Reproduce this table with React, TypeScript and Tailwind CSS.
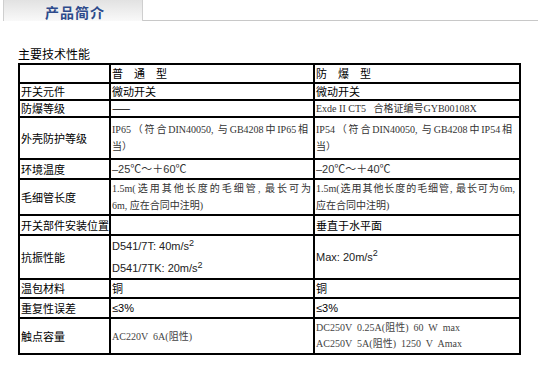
const cjk = "font-['Noto_Sans_CJK_SC',sans-serif]";
const serif = "font-['Liberation_Serif','Noto_Sans_CJK_SC',serif]";
const sans = "font-['Liberation_Sans','Noto_Sans_CJK_SC',sans-serif]";

function Cell({ children, className = "" }: { children?: React.ReactNode; className?: string }) {
  return <div className={`bg-white flex items-center pl-[1px] overflow-hidden ${className}`}>{children}</div>;
}

export default function App() {
  return (
    <div className="w-[538px] h-[381px] bg-white text-black">
      {/* Tab header */}
      <div className="flex h-[21px]">
        <div className="ml-[3px] w-[140px] border-x border-[#cfcfcf] bg-gradient-to-b from-[#e2e2e2] to-[#f9f9f9] flex items-center justify-center pt-[3px]">
          <span className={`${cjk} text-[14px] leading-[16px] font-bold text-[#2e4b8c] tracking-[1px] pl-[4px]`}>产品简介</span>
        </div>
        <div className="flex-1 border-b border-[#c8c8c8]" />
      </div>

      <div className="pl-[18px]">
        <div className={`${cjk} text-[12px] leading-[14px] mt-[26px] mb-[2px]`}>主要技术性能</div>

        <div className="grid w-[503px] grid-cols-[89px_202px_204px] grid-rows-[17px_15px_15px_40px_18px_34px_18px_42px_17px_18px_34px] gap-[2px] p-[2px] bg-black text-[11px] leading-[17px]">
          {/* header */}
          <Cell />
          <Cell className={cjk}>普　通　型</Cell>
          <Cell className={cjk}>防　爆　型</Cell>

          <Cell className={cjk}>开关元件</Cell>
          <Cell className={cjk}>微动开关</Cell>
          <Cell className={cjk}>微动开关</Cell>

          <Cell className={cjk}>防爆等级</Cell>
          <Cell className={cjk}>——</Cell>
          <Cell className={`${serif} text-[10px] text-[#333]`}>Exde II CT5&nbsp;&nbsp; 合格证编号GYB00108X</Cell>

          <Cell className={cjk}>外壳防护等级</Cell>
          <Cell className={`${serif} text-[10px] text-[#333]`}>
            <div className="w-[196px]">
              <span className="block whitespace-nowrap text-justify [text-align-last:justify]">IP65（符合DIN40050, 与GB4208中IP65相</span>
              <span className="block">当）</span>
            </div>
          </Cell>
          <Cell className={`${serif} text-[10px] text-[#333]`}>
            <div className="w-[196px]">
              <span className="block whitespace-nowrap text-justify [text-align-last:justify]">IP54（符合DIN40050, 与GB4208中IP54相</span>
              <span className="block">当）</span>
            </div>
          </Cell>

          <Cell className={cjk}>环境温度</Cell>
          <Cell className={`${sans} text-[#333]`}>–25℃～＋60℃</Cell>
          <Cell className={`${sans} text-[#333]`}>–20℃～＋40℃</Cell>

          <Cell className={cjk}>毛细管长度</Cell>
          <Cell className={`${serif} text-[10px] text-[#333]`}>
            <div className="w-[199px]">
              <span className="block whitespace-nowrap text-justify [text-align-last:justify]">1.5m(选用其他长度的毛细管, 最长可为</span>
              <span className="block">6m, 应在合同中注明)</span>
            </div>
          </Cell>
          <Cell className={`${serif} text-[10px] text-[#333]`}>
            <div className="w-[199px]">
              <span className="block whitespace-nowrap text-justify [text-align-last:justify]">1.5m(选用其他长度的毛细管, 最长可为6m,</span>
              <span className="block">应在合同中注明)</span>
            </div>
          </Cell>

          <Cell className={cjk}>开关部件安装位置</Cell>
          <Cell />
          <Cell className={cjk}>垂直于水平面</Cell>

          <Cell className={cjk}>抗振性能</Cell>
          <Cell className={`${sans} text-[#222] leading-[22px]`}>
            <div>
              <div>D541/7T: 40m/s<sup className="text-[9px]">2</sup></div>
              <div>D541/7TK: 20m/s<sup className="text-[9px]">2</sup></div>
            </div>
          </Cell>
          <Cell className={`${sans} text-[#222]`}>Max: 20m/s<sup className="text-[9px]">2</sup></Cell>

          <Cell className={cjk}>温包材料</Cell>
          <Cell className={cjk}>铜</Cell>
          <Cell className={cjk}>铜</Cell>

          <Cell className={cjk}>重复性误差</Cell>
          <Cell className={sans}>≤3%</Cell>
          <Cell className={sans}>≤3%</Cell>

          <Cell className={cjk}>触点容量</Cell>
          <Cell className={`${serif} text-[10px] text-[#444]`}>AC220V&nbsp; 6A(阻性)</Cell>
          <Cell className={`${serif} text-[10px] text-[#444] leading-[16px]`}>
            <div>
              <div>DC250V&nbsp; 0.25A(阻性)&nbsp; 60&nbsp; W&nbsp; max</div>
              <div>AC250V&nbsp; 5A(阻性)&nbsp; 1250&nbsp; V&nbsp; Amax</div>
            </div>
          </Cell>
        </div>
      </div>
    </div>
  );
}
